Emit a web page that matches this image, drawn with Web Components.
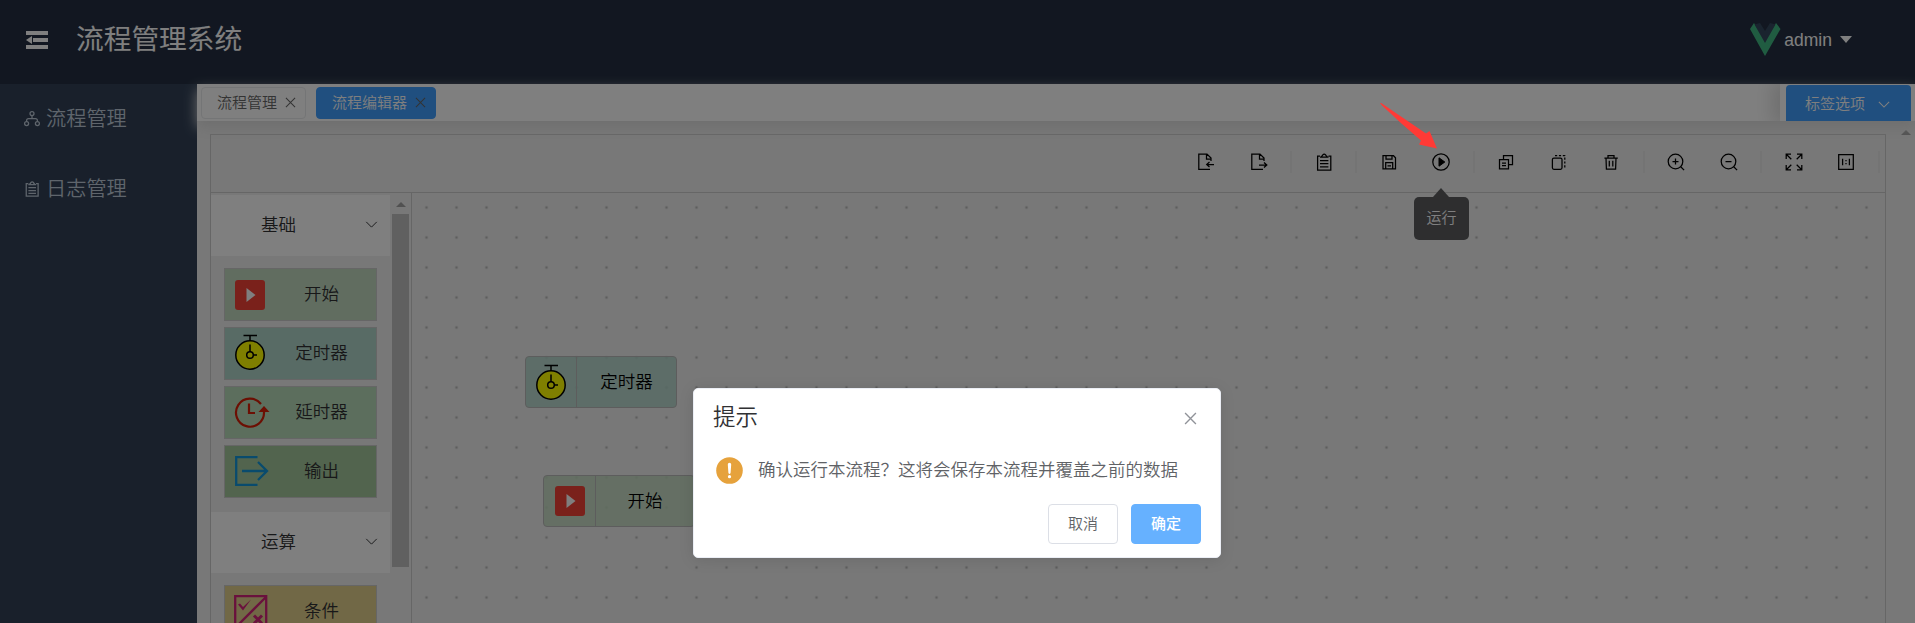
<!DOCTYPE html>
<html lang="zh-CN">
<head>
<meta charset="utf-8">
<title>流程管理系统</title>
<style>
html,body{margin:0;height:100%;overflow:hidden}
body{font-family:"Liberation Sans","Noto Sans CJK SC",sans-serif;font-weight:350;background:#f0f0f0;color:#303133}
</style>
</head>
<body>
<flow-app></flow-app>
<script>
const define=(name,css,html)=>customElements.define(name,class extends HTMLElement{
  constructor(){
    super();
    const t=document.createElement('template');
    t.innerHTML=`<style>*{box-sizing:border-box}${css}</style>`+(typeof html==='function'?html(this):html);
    this.attachShadow({mode:'open'}).append(t.content.cloneNode(true));
  }
});

const ICONS={
fold:['0 0 22 18','<path fill="currentColor" stroke="none" d="M0 0h22v4H0zM7 7h15v4H7zM0 14h22v4H0zM0 9l6-4v8z"/>'],
share:['0 0 16 16','<circle cx="8" cy="2.6" r="2"/><circle cx="2.6" cy="12.6" r="2"/><circle cx="13.4" cy="12.6" r="2"/><path d="M8 4.600v3M2.600 10.600V9.600q0-2 2-2h6.800q2 0 2 2v1"/>'],
clip:['0 0 20 20','<path d="M6 4H3.600v14h13.200V4H14.500M6 5.200h8.500M7 4.500q1.500-.5 1.800-1.700 1.400-1.600 2.800 0 .3 1.200 1.800 1.700M6 8.500h8.400M6 11.700h8.400M6 14.900h8.400"/>'],
close:['0 0 12 12','<path d="M1 1l10 10M11 1L1 11"/>'],
down:['0 0 14 8','<path d="M1 1l6 6 6-6"/>'],
imp:['0 0 20 20','<path d="M15 9V6l-4-4H2.800v15.400H14M10.500 2v5H15M18 12.500h-7M13.500 10l-2.800 2.500 2.800 2.500"/>'],
exp:['0 0 20 20','<path d="M15 9V6l-4-4H2.800v15.400H14M10.500 2v5H15M10 13h7.500M15 10.500l2.800 2.500-2.800 2.500"/>'],
save:['0 0 20 20','<path d="M4 3.700h10.500l2 2v11.100H4zM7 3.700v3.500h6V3.700M6.700 16.800v-6.200h7v6.200M8.500 13.800h3.500"/>'],
run:['0 0 20 20','<circle cx="10" cy="10" r="8.200"/><path fill="currentColor" stroke-width="1" d="M8 5.800v8.400L13.800 10z"/>'],
copy:['0 0 20 20','<path d="M7.500 7V3.700h9v9H13M3.500 7.600h9v9.200h-9zM6 11h4M6 13.600h4"/>'],
dup:['0 0 20 20','<rect x="3.400" y="6" width="9.600" height="11.300" rx="1.500"/><path stroke-dasharray="2.200 1.700" d="M6 3.600h9.800v12"/>'],
trash:['0 0 20 20','<path d="M3.400 6h13.400M7 6V3.500h6V6M5 6l.4 11h9.200L15 6M8.300 8.800v5.800M11.800 8.800v5.800"/>'],
zin:['0 0 20 20','<circle cx="9.500" cy="9.500" r="7.300"/><path d="M14.700 14.700l3.400 3.400M6.500 9.500h6M9.500 6.500v6"/>'],
zout:['0 0 20 20','<circle cx="9.500" cy="9.500" r="7.300"/><path d="M14.700 14.700l3.400 3.400M6.500 9.500h6"/>'],
full:['0 0 20 20','<path d="M2.200 7V2.200H7M2.500 2.500l4.800 4.800M13 2.200h4.800V7M17.500 2.500l-4.800 4.800M2.200 13v4.800H7M2.500 17.500l4.800-4.800M13 17.800h4.800V13M17.500 17.500l-4.800-4.800"/>'],
one:['0 0 20 20','<path d="M2.700 2.700h14.600v14.600H2.700zM6.600 6.800v6.400M13.400 6.800v6.400M10 8v1.300M10 11v1.300"/>'],
start:['0 0 30 36','<g stroke="none"><rect y="3" width="30" height="30" rx="3" fill="#f44336"/><path fill="#fff" d="M11.500 11v14l9-7z"/></g>'],
timer:['0 0 30 36','<g stroke="#000" stroke-width="1.500"><circle cx="15" cy="21" r="14.200" fill="#ff0"/><path d="M8.500 1.500h13.500M15 1.500V7M15 10.500V18M18 21h4"/><circle cx="15" cy="21" r="3.300"/></g>'],
delay:['0 0 34 30','<g stroke="#d81e06" stroke-width="2.200"><path d="M26 7A14 14 0 1 0 29 15M14 6.500V16h6"/><path fill="#d81e06" stroke="none" d="M29 9l5.500 6h-11z"/></g>'],
output:['0 0 34 30','<path stroke="#1296db" stroke-width="2.300" d="M22.500 1.200H1.200v27.600H22.500M7 15h25M23 6l9 9-9 9"/>'],
cond:['0 0 34 34','<g stroke="#d4237a" stroke-width="2.300"><path d="M1.200 1.200h31v31H1.200zM32 2L2 32"/><path fill="#d4237a" stroke="none" d="M4 9.500l2-1 3 3.500 8-7.500L9 15.500z"/><path stroke-width="3" d="M20 20.500l8 8M28 20.500l-8 8"/></g>'],
tri:['0 0 12 7','<path fill="currentColor" stroke="none" d="M0 0h12L6 7z"/>'],
triup:['0 0 10 5','<path fill="currentColor" stroke="none" d="M0 5h10L5 0z"/>'],
vue:['0 0 30 33','<g stroke="none"><path fill="#41b883" d="M0 6L4 0 15 18 26 0l4.500 6L15 33z"/><path fill="#35495e" d="M4.500 1.500L10 0l5 8 5-8 5.500 1.500L15 20z"/></g>'],
warn:['0 0 27 27','<circle cx="13.500" cy="13.500" r="13.300" fill="#e6a23c" stroke="none"/><path fill="#fff" stroke="none" d="M11.800 7.400a1.700 1.700 0 0 1 3.400 0l-.6 8.400a1.100 1.100 0 0 1-2.200 0z"/><circle cx="13.500" cy="19.700" r="1.600" fill="#fff" stroke="none"/>'],
arrow:['0 0 58 46','<path fill="#ff3a36" stroke="none" d="M0 0Q1-.5 3 1.200L46 30.500l3.500-2.500 7.500 17.500-18-4 2-4L22 21 2 2.500z"/>']
};
customElements.define('ui-icon',class extends HTMLElement{
  constructor(){super();this.attachShadow({mode:'open'})}
  connectedCallback(){
    const [vb,body]=ICONS[this.getAttribute('name')],g=k=>this.getAttribute(k);
    this.shadowRoot.innerHTML=`<style>:host{display:block;flex:none;width:${g('w')}px;height:${g('h')}px}svg{display:block;width:100%;height:100%;overflow:visible}</style><svg viewBox="${vb}" fill="none" stroke="currentColor" stroke-width="${g('s')||1.25}">${body}</svg>`;
  }
});

define('app-header',`:host{display:flex;align-items:center;height:84px;background:#242f42;color:#fff;padding:0 63px 5px 26px}
h1{font-size:27.7px;font-weight:400;margin:1px 0 0 28px;flex:1;line-height:40px}
.u{display:flex;align-items:center;font-size:17.5px;line-height:24px;gap:8px}.u span{margin-left:-4px}`,
`<ui-icon name="fold" w="22" h="18"></ui-icon><h1>流程管理系统</h1><div class="u"><ui-icon name="vue" w="30" h="33"></ui-icon><span>admin</span><ui-icon name="tri" w="12" h="7"></ui-icon></div>`);

define('side-item',`:host{display:flex;align-items:center;height:70px;padding-left:24px;color:#bfcbd9;font-size:20.2px;line-height:30px}.i{width:22px;flex:none}`,`<span class="i"><slot name="icon"></slot></span><span><slot></slot></span>`);
define('app-sidebar',`:host{display:block;width:197px;flex:none;background:#324157}`,
`<side-item><ui-icon slot="icon" name="share" w="16" h="16"></ui-icon>流程管理</side-item><side-item><ui-icon slot="icon" name="clip" w="18" h="18" s="1.400" style="margin-left:-1px"></ui-icon>日志管理</side-item>`);

define('tag-item',`:host{display:flex;align-items:center;height:32px;border:1px solid #e9eaec;border-radius:4px;background:#fff;color:#666;font-size:15px;line-height:20px;padding:0 9px 1px 15px;gap:8px}
:host([active]){background:#409eff;border-color:#409eff;color:#fff}ui-icon{color:#666}`,
`<span><slot></slot></span><ui-icon name="close" w="11" h="11" s="1.100"></ui-icon>`);
define('tags-bar',`:host{display:flex;position:relative;z-index:1;height:37px;background:#fff;box-shadow:0 6px 13px #ddd}
.l{display:flex;flex:1;gap:10px;padding:3px 0 0 4px}
.r{width:135px;background:#fff;box-shadow:-4px 0 19px 4px #ddd;padding:1px 4px 0 6px;clip-path:inset(0 0 0 -30px)}
.b{height:36px;background:#409eff;border-radius:4px 4px 0 0;color:#fff;display:flex;align-items:center;padding:2px 21px 0 19px;justify-content:space-between;font-size:15px;line-height:20px}`,
`<div class="l"><tag-item>流程管理</tag-item><tag-item active>流程编辑器</tag-item></div><div class="r"><div class="b"><span>标签选项</span><ui-icon name="down" w="12" h="7"></ui-icon></div></div>`);

define('tool-bar',`:host{display:flex;justify-content:flex-end;align-items:center;height:58px;border-bottom:1px solid #ccc;color:#000;padding:0 0 3px}
i{width:52.5px;display:flex;justify-content:center}b{width:12.5px;height:22px;display:flex;justify-content:center}b::before{content:"";width:2px;background:#e8e8e8}`,
['imp','exp','','clip','','save','run','','copy','dup','trash','','zin','zout','','full','one',''].map(n=>n?`<i><ui-icon name="${n}" w="20" h="20" s="1.250"></ui-icon></i>`:'<b></b>').join(''));

define('palette-group',`:host{display:block;margin-bottom:14px}
.h{height:61px;background:#fff;display:flex;align-items:center;justify-content:space-between;padding:0 12px 2px 50px;font-size:17.5px;line-height:26px;width:179px}
.l{display:flex;flex-direction:column;gap:6px;padding:12px 13px 0}`,
h=>`<div class="h"><span>${h.getAttribute('label')}</span><ui-icon name="down" w="13" h="7" s="1.100"></ui-icon></div><div class="l"><slot></slot></div>`);
define('palette-item',`:host{display:flex;align-items:center;width:153px;height:53px;border:1px solid #ccc;padding-left:10px;font-size:17.5px;line-height:26px;background:var(--c)}
.i{width:34px;flex:none}.t{flex:1;text-align:center;padding:0 3px 1px 1px}`,`<span class="i"><slot name="icon"></slot></span><span class="t"><slot></slot></span>`);
define('node-palette',`:host{display:flex;width:201px;flex:none;border-right:1px solid #ccc;padding-top:2px;overflow:hidden}
.c{width:179px;flex:none}.s{width:17px;margin-left:2px;display:flex;flex-direction:column;align-items:center;color:#a3a3a3;padding-top:7px;background:#f1f1f1}
.s div{width:17px;height:353px;background:#c1c1c1;margin-top:7px}`,
`<div class="c"><palette-group label="基础">
<palette-item style="--c:#c3dbc1"><ui-icon slot="icon" name="start" w="30" h="36"></ui-icon>开始</palette-item>
<palette-item style="--c:#b0d6ca"><ui-icon slot="icon" name="timer" w="30" h="36" style="margin-top:-3px"></ui-icon>定时器</palette-item>
<palette-item style="--c:#b8dcba"><ui-icon slot="icon" name="delay" w="34" h="30" style="margin-top:-1px"></ui-icon>延时器</palette-item>
<palette-item style="--c:#a4c89c"><ui-icon slot="icon" name="output" w="34" h="30" style="margin-top:-1px"></ui-icon>输出</palette-item>
</palette-group><palette-group label="运算"><palette-item style="--c:#e2d08c"><ui-icon slot="icon" name="cond" w="34" h="34" style="margin-left:-1px"></ui-icon>条件</palette-item></palette-group></div>
<div class="s"><ui-icon name="triup" w="10" h="5"></ui-icon><div></div></div>`);

define('flow-node',`:host{position:absolute;display:flex;width:152px;height:52px;border:1px solid #bbb;border-radius:4px;background:var(--c);color:#000;font-size:17.5px;line-height:26px}
.i{width:var(--w,51px);border-right:1px solid #bbb;display:flex;align-items:center;justify-content:center}.t{flex:1;display:flex;align-items:center;justify-content:center}`,
`<div class="i"><slot name="icon"></slot></div><div class="t"><span><slot></slot></span></div>`);
define('flow-canvas',`:host{display:block;position:relative;flex:1;overflow:hidden}
.d{position:absolute;inset:0;background:radial-gradient(circle,#bcbcbc .9px,transparent 1.700px) -.5px -.5px/30px 30px;pointer-events:none}`,
`<div class="d"></div><flow-node style="left:113px;top:163px;--c:#b0d6cad8"><ui-icon slot="icon" name="timer" w="30" h="36"></ui-icon>定时器</flow-node><flow-node style="left:131px;top:282px;--w:52px;--c:#c3dbc1d8"><ui-icon slot="icon" name="start" w="30" h="36"></ui-icon>开始</flow-node>`);

define('tool-tip',`:host{position:absolute;left:1414px;top:197px;width:55px;height:43px;background:#5c5d5f;border-radius:5px;color:#fff;font-size:15px;line-height:42px;text-align:center}
:host::before{content:"";position:absolute;left:19px;top:-9px;border:8px solid transparent;border-top:0;border-bottom:9px solid #5c5d5f}`,`<slot></slot>`);

define('message-box',`:host{display:flex;flex-direction:column;width:528px;height:170px;background:#fff;border:1px solid #ebeef5;border-radius:5px;box-shadow:0 2px 15px rgba(0,0,0,.1);padding:12px 19px 13px;color:#606266}
.h{display:flex;justify-content:space-between;align-items:center;font-size:22.5px;line-height:34px;color:#303133;padding-right:4px}.h ui-icon{color:#909399}
.m{display:flex;align-items:center;gap:15px;font-size:17.5px;line-height:30px;padding:20px 0 0 3px;white-space:nowrap}
.f{display:flex;justify-content:flex-end;gap:13px;margin-top:auto}
button{width:70px;height:40px;border:1px solid #dcdfe6;border-radius:4px;background:#fff;color:#606266;font:350 15px/20px "Liberation Sans","Noto Sans CJK SC",sans-serif;padding:0}
.p{background:#66b1ff;border-color:#66b1ff;color:#fff;font-weight:500}`,
`<div class="h"><span>提示</span><ui-icon name="close" w="13" h="13"></ui-icon></div><div class="m"><ui-icon name="warn" w="27" h="27"></ui-icon><span>确认运行本流程？这将会保存本流程并覆盖之前的数据</span></div><div class="f"><button>取消</button><button class="p">确定</button></div>`);

define('flow-app',`:host{display:flex;flex-direction:column;width:100vw;height:100vh;position:relative;overflow:hidden}
.row{display:flex;flex:1;min-height:0}.main{flex:1;display:flex;flex-direction:column;min-width:0}
.body{flex:1;display:flex;min-height:0;justify-content:space-between}
.ed{width:1676px;margin:13px 0 0 13px;border:1px solid #ccc;border-bottom:0;display:flex;flex-direction:column}
.w{display:flex;flex:1;min-height:0}.sb{padding:9px 4px 0 0;color:#a3a3a3}
.mask{position:absolute;inset:0;z-index:5;background:rgba(0,0,0,.5);display:flex;justify-content:center;align-items:flex-start;padding-top:388px}
message-box{margin-left:-1px}.red{position:absolute;left:1380px;top:103px;z-index:6}`,
`<app-header></app-header><div class="row"><app-sidebar></app-sidebar><div class="main"><tags-bar></tags-bar><div class="body"><div class="ed"><tool-bar></tool-bar><div class="w"><node-palette></node-palette><flow-canvas></flow-canvas></div></div><div class="sb"><ui-icon name="triup" w="10" h="5"></ui-icon></div></div></div></div>
<tool-tip>运行</tool-tip><div class="mask"><message-box></message-box></div><ui-icon class="red" name="arrow" w="58" h="46"></ui-icon>`);
</script>
</body>
</html>
